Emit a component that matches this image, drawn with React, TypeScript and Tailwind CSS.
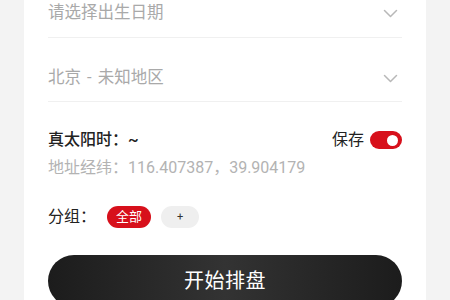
import React from "react";

const Chevron = () => (
    <svg className="w-[15px] h-[9px] text-[#b8b8b8]" viewBox="0 0 15 9" fill="none" stroke="currentColor" strokeWidth={1.5} strokeLinecap="round" strokeLinejoin="round">
        <path d="M1.5 1.5l6 6 6-6" />
    </svg>
);

const App = () => {
    return (
        <div className="w-[450px] h-[300px] overflow-hidden bg-[#f3f3f3] px-[24px]" style={{ fontFamily: 'Roboto, "Noto Sans CJK SC", sans-serif' }}>
            <div className="bg-white h-full px-[24px] flex flex-col">
                <div className="-mt-[26px]">
                    {/* Date picker */}
                    <div className="flex items-center justify-between pt-[28px] pb-[13px] border-b border-[#f0f0f0]">
                        <span className="text-[16.5px] leading-[22px] text-[#a9a9a9]">请选择出生日期</span>
                        <span className="mr-[4px]"><Chevron /></span>
                    </div>

                    {/* Region picker */}
                    <div className="flex items-center justify-between pt-[29px] pb-[12px] border-b border-[#f0f0f0]">
                        <span className="text-[16.5px] leading-[22px] text-[#a9a9a9]">
                            北京<span className="mx-[2px]"> - </span>未知地区
                        </span>
                        <span className="mr-[4px]"><Chevron /></span>
                    </div>
                </div>

                {/* True solar time */}
                <div className="mt-[26px] flex items-center justify-between">
                    <span className="text-[16px] leading-[24px] font-medium text-[#222]">真太阳时：~</span>
                    <div className="flex items-center gap-[6px]">
                        <span className="text-[16px] leading-[24px] text-[#222]">保存</span>
                        <div className="w-[32px] h-[18px] rounded-full bg-[#d7101b] flex items-center justify-end pr-[4px]">
                            <div className="w-[11px] h-[11px] rounded-full bg-white" />
                        </div>
                    </div>
                </div>
                <div className="mt-[6px] text-[16px] leading-[20px] text-[#b3b3b3]">地址经纬：116.407387，39.904179</div>

                {/* Group */}
                <div className="mt-[27px] flex items-center">
                    <span className="text-[16px] leading-[24px] text-[#222] w-[59px]">分组：</span>
                    <span className="h-[22px] w-[44px] rounded-full bg-[#d7101b] text-white text-[13px] flex items-center justify-center">全部</span>
                    <span className="ml-[10px] h-[22px] w-[38px] rounded-full bg-[#efefef] text-[#333] text-[11px] flex items-center justify-center">+</span>
                </div>

                {/* Start */}
                <button className="mt-[26px] w-full h-[52px] shrink-0 rounded-full bg-gradient-to-r from-[#1c1c1c] via-[#333] to-[#1c1c1c] text-white text-[20px] tracking-[0.5px]">
                    开始排盘
                </button>
            </div>
        </div>
    );
};

export default App;
